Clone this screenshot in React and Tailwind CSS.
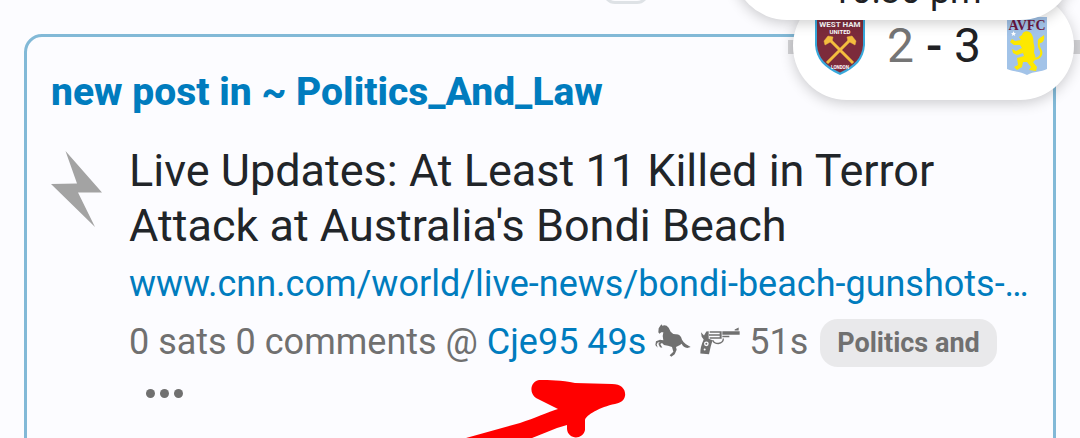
import React from 'react';

const Bolt = () => (
    <svg viewBox="0 0 51 76" className="w-[51px] h-[76px]" fill="#a3a3a3">
        <path d="M14.5 0 L51 41.5 L27 41.5 L44 76 L0 33 L26 32.5 Z" />
    </svg>
);

const Horse = () => (
    <svg viewBox="41 37 108 99" className="inline-block w-9 h-[33px] align-[-3px]" fill="#707070">
        <path d="M52 50 L60 38 L63 42 Q74 38 82 48 L88 60 Q94 68 104 68 Q118 68 122 84 Q126 92 134 98 L148 106 L138 109 Q126 107 121 96 L116 100 L104 106 L106 114 L100 128 L90 135 L85 131 L96 120 L92 106 L80 102 L68 100 L62 94 L50 92 L46 98 L49 108 L42 100 L44 89 L56 84 L66 86 Q62 74 66 62 L60 62 L54 66 L51 62 Z" />
        <path d="M66 92 L57 97 L63 108 L56 107 L51 96 L60 88 Z" />
    </svg>
);

const Pistol = () => (
    <svg viewBox="171 45 120 83" className="inline-block w-10 h-7 align-[-1px]" fill="#707070">
        <path d="M174 60 L183 70 L190 58 L197 57 L197 80 L209 84 Q206 92 203 104 L198 126 L172 124 Q171 106 182 82 L176 74 Z" />
        <path d="M200 57 H233 V62 H200 Z M198 66 H233 V71 H198 Z M200 75 H233 V80 H200 Z M230 57 H236 V80 H230 Z M238 57 H290 V68 H238 Z M238 71 H259 V75 H238 Z M275 52 L287 46 V55 H275 Z" />
        <path d="M209 84 Q213 94 226 94 Q241 92 241 79" fill="none" stroke="#707070" strokeWidth="4" />
        <circle cx="190" cy="95" r="7" fill="#fcfcff" />
        <circle cx="190" cy="95" r="3" />
        <circle cx="185" cy="112" r="3" fill="#fcfcff" />
    </svg>
);

const WestHam = () => (
    <svg viewBox="0 0 52 58" className="w-[52px] h-[58px]">
        <path d="M1 0 H51 V28 C50 42 42 51 26 58 C10 51 2 42 1 28 Z" fill="#38a9dc" />
        <path d="M3 2 H49 V28 C48 41 40 49 26 55.5 C12 49 4 41 3 28 Z" fill="#7c2b3b" />
        <g stroke="#f3bd3e" fill="#f3bd3e">
            <path d="M15 22 L39 46 M37 22 L13 46" strokeWidth="3" />
            <path d="M10 24 L14 19 L19 20 L18 24 L11 28 Z M42 24 L38 19 L33 20 L34 24 L41 28 Z" strokeWidth="0.5" />
        </g>
        <g fill="#fff" fontFamily="Roboto, sans-serif" fontWeight="700" textAnchor="middle">
            <text x="26" y="10" fontSize="8">WEST HAM</text>
            <text x="26" y="17" fontSize="6">UNITED</text>
            <text x="26" y="52" fontSize="4.5">LONDON</text>
        </g>
    </svg>
);

const Villa = () => (
    <svg viewBox="0 0 40 58" className="w-10 h-[58px]">
        <path d="M0 0 H40 V52 C34 55 27 54 20 58 C13 54 6 55 0 52 Z" fill="#a2c3e8" />
        <text x="20" y="13" fontSize="14" fontWeight="700" fontFamily="Liberation Serif, serif" textAnchor="middle" fill="#6b1740">AVFC</text>
        <path d="M6.5 14 L7.3 16 L9 16 L7.7 17.3 L8.2 19 L6.5 18 L4.8 19 L5.3 17.3 L4 16 L5.7 16 Z" fill="#fff" />
        <path d="M15 18 C16 13 23 13 25 18 C27 21 26 24 27 28 C28 31 27 33 27 36 C29 39 29 43 26 45 L30 50 L29 54 L22 53 L24 50 L20 45 L16 45 L15 50 L10 53 L7 50 L11 48 L10 41 L17 39 L16 36 L10 38 L6 36 L5 32 L9 34 L15 31 L13 28 L7 28 L3 25 L5 22 L8 24 L14 23 L12 20 Z" fill="#fde800" />
        <path d="M26 42 C34 42 36 36 33 32 C31 28 31 26 33 24" fill="none" stroke="#fde800" strokeWidth="2" />
        <path d="M31 26 C30 21 34 21 37 18 C38 23 36 27 31 26 Z" fill="#fde800" />
    </svg>
);

const Arrow = () => (
    <svg viewBox="440 360 220 78" className="absolute left-[440px] top-[360px] w-[220px] h-[78px]" fill="#ff0000">
        <path d="M466 438 L520 423 C535 418 548 412 558 409 L536 398 C529 393 530 382 539 380 C550 380 561 380 575 383 L612 384 C622 384 626 390 625 396 C624 401 620 403 615 404 C600 407 586 415 585 420 L585 430 C583 440 568 440 567 429 L567 425 L557 428 L532 438 Z" />
    </svg>
);

const App = () => {
    return (
        <div className="relative h-screen overflow-hidden bg-[#fcfcff] pt-[34px] px-6 font-['Roboto',sans-serif]">
            <div className="absolute left-[603px] -top-10 w-[46px] h-11 rounded-xl border-3 border-[#dee2e6]" />

            <article className="border-3 border-[#82b9d7] rounded-[18px] pl-6 pr-5 pt-8 pb-9">
                <h2 className="text-[39px] leading-[46px] font-extrabold text-[#007cbe]">new post in ~ Politics_And_Law</h2>
                <div className="flex mt-7">
                    <button className="w-[78px] shrink-0 self-start mt-2" aria-label="zap">
                        <Bolt />
                    </button>
                    <div className="min-w-0 grow">
                        <h1 className="text-[45px] leading-[55px] text-[#212529]">
                            Live Updates: At Least 11 Killed in Terror Attack at Australia's Bondi Beach
                        </h1>
                        <a href="#link" className="block truncate mt-1 text-[36px] leading-[54px] text-[#007cbe]">
                            www.cnn.com/world/live-news/bondi-beach-gunshots-hnk
                        </a>
                        <div className="mt-1 text-[36px] leading-[54px] text-[#707070] whitespace-nowrap">
                            0 sats 0 comments @ <a href="#user" className="text-[#007cbe]">Cje95 49s</a>{' '}
                            <Horse /> <Pistol /> 51s
                            <span className="inline-block ml-3 px-[17px] rounded-[18px] bg-[#e9e9eb] text-[27px] leading-[48px] font-bold align-[2px]">
                                Politics and
                            </span>
                        </div>
                        <button className="flex gap-[5px] ml-[17px] h-12 items-center" aria-label="more">
                            <span className="size-[9px] rounded-full bg-[#707070]" />
                            <span className="size-[9px] rounded-full bg-[#707070]" />
                            <span className="size-[9px] rounded-full bg-[#707070]" />
                        </button>
                    </div>
                </div>
            </article>

            <Arrow />

            {/* floating match score */}
            <div className="absolute right-0 top-10 w-[292px] h-[14px] bg-[#d4d4d7]" />
            <div className="absolute right-[6px] -top-2 flex items-end gap-[21px] w-[281px] h-[108px] pl-[21px] pr-[27px] pb-[25px] rounded-[54px] bg-white shadow-[0_3px_14px_rgba(0,0,0,0.2)]">
                <WestHam />
                <div className="grow text-[48px] leading-[58px] whitespace-nowrap text-[#202124]">
                    <span className="text-[#757575]">2</span> <span className="font-medium">-</span> 3
                </div>
                <Villa />
            </div>
            <div className="absolute right-[6px] -top-[88px] w-[341px] h-[108px] pt-[56px] pl-[6px] rounded-[54px] bg-white text-center text-[36px] leading-[46px] text-[#202124] shadow-[0_3px_14px_rgba(0,0,0,0.2)]">
                10:30 pm
            </div>
        </div>
    );
};

export default App;
